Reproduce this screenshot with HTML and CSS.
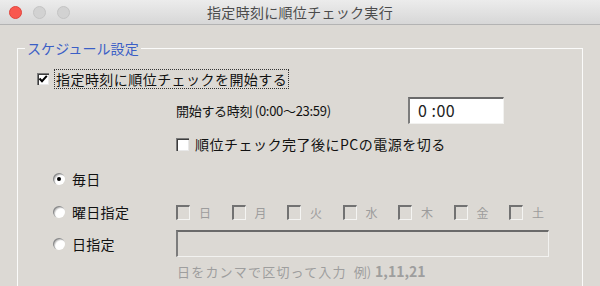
FILE: index.html
```html
<!DOCTYPE html>
<html lang="ja">
<head>
<meta charset="utf-8">
<title>指定時刻に順位チェック実行</title>
<link rel="stylesheet" href="styles.css">
</head>
<body>
<div class="window">
  <div class="titlebar">
    <div class="lights">
      <span class="light red"></span>
      <span class="light"></span>
      <span class="light"></span>
    </div>
    <div class="title">指定時刻に順位チェック実行</div>
    <div></div>
  </div>
  <div class="content">
    <fieldset class="group">
      <legend class="legend">スケジュール設定</legend>

      <div class="row row-start">
        <span class="cb">
          <svg class="check" viewBox="0 0 12 12" width="12" height="12"><path d="M2.5 5.5 L5 8.2 L9.8 2.8" fill="none" stroke="#000" stroke-width="2"/></svg>
        </span>
        <span class="focus-label">指定時刻に順位チェックを開始する</span>
      </div>

      <div class="row row-time">
        <span class="time-label">開始する時刻 (0:00～23:59)</span>
        <span class="field time-field">0 :00</span>
      </div>

      <div class="row row-power">
        <span class="cb"></span>
        <span class="power-label">順位チェック完了後にPCの電源を切る</span>
      </div>

      <div class="row row-daily">
        <span class="opt"><span class="radio on"></span><span class="opt-label">毎日</span></span>
      </div>

      <div class="row row-week">
        <span class="opt"><span class="radio"></span><span class="opt-label">曜日指定</span></span>
        <div class="days">
          <span class="day"><span class="dcb"></span><span class="day-label">日</span></span>
          <span class="day"><span class="dcb"></span><span class="day-label">月</span></span>
          <span class="day"><span class="dcb"></span><span class="day-label">火</span></span>
          <span class="day"><span class="dcb"></span><span class="day-label">水</span></span>
          <span class="day"><span class="dcb"></span><span class="day-label">木</span></span>
          <span class="day"><span class="dcb"></span><span class="day-label">金</span></span>
          <span class="day"><span class="dcb"></span><span class="day-label">土</span></span>
        </div>
      </div>

      <div class="row row-date">
        <span class="opt"><span class="radio"></span><span class="opt-label">日指定</span></span>
        <span class="field date-field"></span>
      </div>

      <div class="row hint"><span class="hint-text">日をカンマで区切って入力</span><span class="hint-ex">例) <b>1,11,21</b></span></div>
    </fieldset>
  </div>
</div>
</body>
</html>
```

FILE: styles.css
```css
* { box-sizing: border-box; }

html, body {
  margin: 0;
  padding: 0;
}

body {
  width: 600px;
  height: 286px;
  overflow: hidden;
  font-family: "Noto Sans CJK JP", "Noto Sans", sans-serif;
  background: #dcd9d4;
}

.window {
  width: 600px;
  height: 286px;
  background: #dcd9d4;
  display: flex;
  flex-direction: column;
  overflow: hidden;
}

.titlebar {
  height: 25px;
  flex: none;
  display: grid;
  grid-template-columns: 1fr auto 1fr;
  align-items: center;
  background: linear-gradient(#ececec, #d7d7d7);
  border-bottom: 1px solid #b3b3b3;
}

.lights {
  display: flex;
  gap: 11px;
  padding-left: 9px;
  padding-top: 1px;
}

.light {
  width: 13px;
  height: 13px;
  border-radius: 50%;
  background: #d2d2d2;
  border: 1px solid #c4c4c4;
}

.light.red {
  background: #f9584f;
  border-color: #e0443c;
}

.title {
  font-size: 14px;
  color: #4b4b4b;
  letter-spacing: 0.3px;
  line-height: 16px;
}

.content {
  flex: 1;
  min-height: 0;
  padding: 15px 17px 0 17px;
  overflow: hidden;
}

.group {
  margin: 0;
  padding: 0;
  height: 100%;
  border: 1px solid #fbfbfa;
  border-bottom: none;
  min-width: 0;
}

.legend {
  margin-left: 7px;
  padding: 0 2px 0 2px;
  font-size: 14px;
  line-height: 16px;
  color: #3b5fc6;
  letter-spacing: 0.1px;
}

.row {
  display: flex;
  align-items: center;
  font-size: 14px;
  color: #111;
}

.row-start {
  height: 24px;
  margin-top: 11px;
  padding-left: 19px;
}

.cb {
  width: 12px;
  height: 12px;
  flex: none;
  background: #fff;
  box-shadow: inset 1px 1px 0 #7a7a7a, inset 2px 2px 0 #3c3c3c, inset -1px -1px 0 #e8e8e8;
  display: flex;
  align-items: center;
  justify-content: center;
}

.check {
  display: block;
}

.focus-label {
  margin-left: 5px;
  height: 20px;
  display: flex;
  align-items: center;
  padding: 0 1px 0 1px;
  border: 1px dotted #333;
  letter-spacing: 0.45px;
  line-height: 18px;
}

.row-time {
  height: 27px;
  margin-top: 6px;
  padding-left: 158px;
}

.time-label {
  width: 232px;
  font-size: 13px;
  letter-spacing: -0.3px;
}

.field {
  display: block;
  border-top: 2px solid #6a6a6a;
  border-left: 2px solid #7c7c7c;
  border-right: 1px solid #f2f2f0;
  border-bottom: 1px solid #f2f2f0;
}

.time-field {
  width: 96px;
  height: 27px;
  background: #fff;
  font-size: 16px;
  line-height: 22px;
  padding-left: 8px;
  color: #222;
  letter-spacing: 0.5px;
}

.row-power {
  height: 20px;
  margin-top: 10px;
  padding-left: 158px;
}

.row-power .cb {
  width: 13px;
  height: 13px;
}

.power-label {
  margin-left: 6px;
  letter-spacing: 0.5px;
}

.row-daily {
  height: 20px;
  margin-top: 15px;
  padding-left: 35px;
}

.row-week {
  height: 20px;
  margin-top: 13px;
  padding-left: 35px;
}

.row-date {
  height: 27px;
  margin-top: 8px;
  padding-left: 35px;
}

.opt {
  width: 123px;
  flex: none;
  display: flex;
  align-items: center;
}

.radio {
  width: 12px;
  height: 12px;
  flex: none;
  border-radius: 50%;
  background: #fff;
  box-shadow: inset 1px 1px 0 #8a8a8a, inset 2px 2px 1px #c8c8c8;
  display: flex;
  align-items: center;
  justify-content: center;
}

.radio.on::after {
  content: "";
  width: 4px;
  height: 4px;
  border-radius: 50%;
  background: #000;
}

.opt-label {
  margin-left: 7px;
  letter-spacing: 0.3px;
}

.days {
  display: flex;
}

.day {
  width: 55.5px;
  flex: none;
  display: flex;
  align-items: center;
}

.dcb {
  width: 14px;
  height: 15px;
  flex: none;
  border-top: 2px solid #727272;
  border-left: 2px solid #727272;
  border-right: 1px solid #f4f4f2;
  border-bottom: 1px solid #f4f4f2;
}

.day-label {
  margin-left: 9px;
  font-size: 12px;
  color: #9c9c9c;
}

.date-field {
  width: 373px;
  height: 27px;
  background: #dcd9d4;
}

.hint {
  height: 18px;
  margin-top: 5px;
  padding-left: 159px;
  font-size: 13px;
  color: #9e9e9e;
}

.hint-text {
  letter-spacing: 1.2px;
}

.hint-ex {
  margin-left: 7px;
}

.hint b {
  font-weight: bold;
  font-size: 14px;
  margin-left: 1px;
}
```
